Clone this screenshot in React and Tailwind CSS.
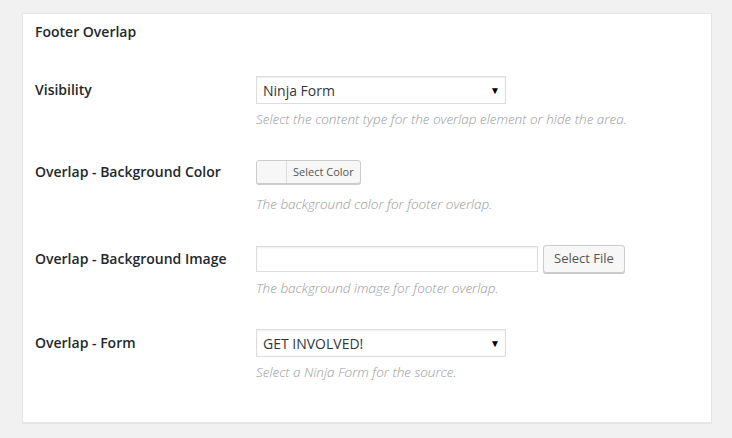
import React from "react";

const font = { fontFamily: '"Open Sans", "Noto Sans", sans-serif' };

function Label({ children }) {
  return (
    <div className="w-[221px] shrink-0 text-[14px] leading-[20px] font-semibold text-[#23282d]">
      {children}
    </div>
  );
}

function Desc({ children, className = "" }) {
  return (
    <div className={"text-[13.5px] leading-[18px] italic font-light text-[#999] " + className}>
      {children}
    </div>
  );
}

function Select({ value }) {
  return (
    <div className="w-[250px] h-[28px] border border-[#ddd] bg-white flex items-center justify-between pl-[6px] pr-[5px] shadow-[inset_0_1px_2px_rgba(0,0,0,0.07)]">
      <span className="text-[14px] text-[#32373c]">{value}</span>
      <span className="text-[10px] text-black leading-none">▼</span>
    </div>
  );
}

export default function App() {
  return (
    <div className="min-h-[438px] bg-[#f1f1f1] pt-[13px] pl-[22px]" style={font}>
      <div className="w-[690px] h-[410px] bg-white border border-[#e5e5e5] shadow-[0_1px_1px_rgba(0,0,0,0.04)] pl-[12px] pt-[8px]">
        <div className="text-[14px] leading-[20px] font-semibold text-[#23282d]">Footer Overlap</div>

        <div className="mt-[34px] flex items-center">
          <Label>Visibility</Label>
          <Select value="Ninja Form" />
        </div>
        <div className="flex">
          <div className="w-[221px] shrink-0" />
          <Desc className="mt-[6px]">Select the content type for the overlap element or hide the area.</Desc>
        </div>

        <div className="mt-[32px] flex items-center">
          <Label>Overlap - Background Color</Label>
          <div className="h-[24px] flex border border-[#ccc] rounded-[3px] bg-[#f7f7f7] shadow-[0_1px_0_#ccc] overflow-hidden">
            <div className="w-[30px] h-full bg-[#f7f7f7] border-r border-[#ddd]" />
            <div className="px-[6px] flex items-center text-[11px] text-[#555]">Select Color</div>
          </div>
        </div>
        <div className="flex">
          <div className="w-[221px] shrink-0" />
          <Desc className="mt-[11px]">The background color for footer overlap.</Desc>
        </div>

        <div className="mt-[32px] flex items-center">
          <Label>Overlap - Background Image</Label>
          <div className="w-[282px] h-[26px] border border-[#ddd] bg-white shadow-[inset_0_1px_2px_rgba(0,0,0,0.07)]" />
          <div className="ml-[5px] h-[28px] px-[10px] flex items-center border border-[#ccc] rounded-[3px] bg-[#f7f7f7] shadow-[0_1px_0_#ccc] text-[13px] text-[#555]">
            Select File
          </div>
        </div>
        <div className="flex">
          <div className="w-[221px] shrink-0" />
          <Desc className="mt-[6px]">The background image for footer overlap.</Desc>
        </div>

        <div className="mt-[32px] flex items-center">
          <Label>Overlap - Form</Label>
          <Select value="GET INVOLVED!" />
        </div>
        <div className="flex">
          <div className="w-[221px] shrink-0" />
          <Desc className="mt-[6px]">Select a Ninja Form for the source.</Desc>
        </div>
      </div>
    </div>
  );
}
